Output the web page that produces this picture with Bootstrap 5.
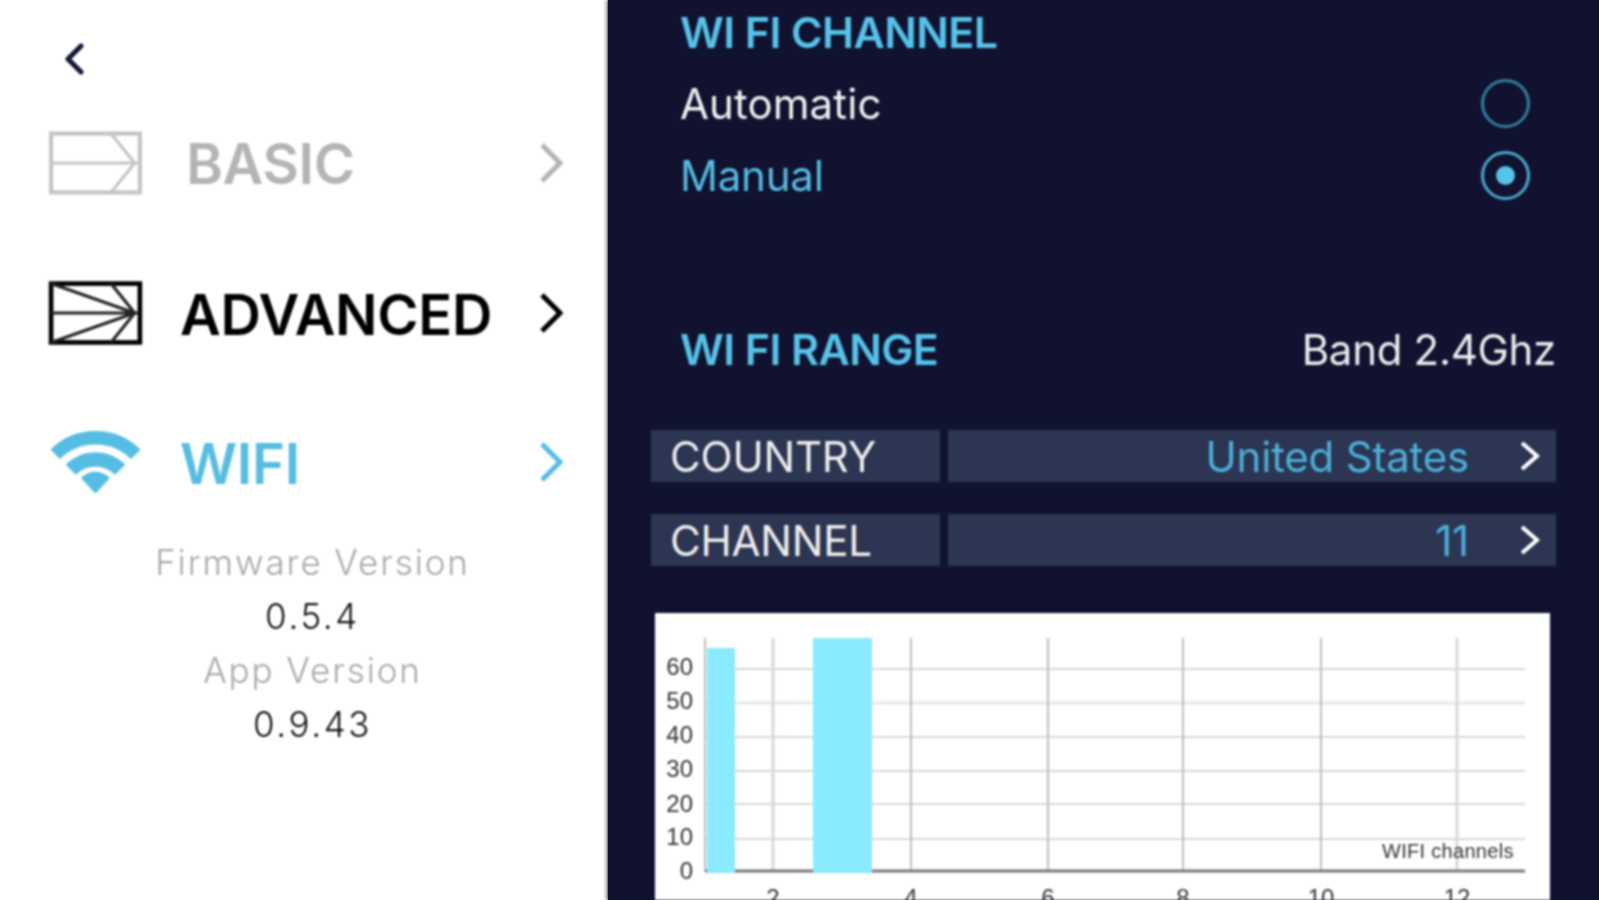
<!DOCTYPE html>
<html lang="en">
<head>
<meta charset="utf-8">
<title>WiFi settings</title>
<link href="https://cdn.jsdelivr.net/npm/bootstrap@5.3.0/dist/css/bootstrap.min.css" rel="stylesheet">
<style>
html,body{height:900px;overflow:hidden;background:linear-gradient(90deg,#fff 608px,#10122f 608px)}
body{font-family:Inter,"Liberation Sans",sans-serif}
.stage{height:900px;filter:blur(.9px)}
.side{width:608px;flex:none;padding-left:48px;padding-right:45px}
.back-link{height:88px;padding-left:16px;padding-top:43px}
.menu-row{height:150px;font-size:56px;font-weight:600;letter-spacing:-.3px}
.menu-row .lbl{flex-grow:1;line-height:1;padding-top:3px}
.menu-basic{color:#b4b4b4}.menu-basic .lbl{margin-left:42px;padding-top:1px}
.menu-adv{color:#000}.menu-adv .lbl{margin-left:36px}
.menu-wifi{color:#55bde3;height:148px}.menu-wifi .lbl{margin-left:36px}
.ver-block{text-align:center;font-size:35px;letter-spacing:1.9px;line-height:54px;font-weight:300;margin-top:-1px;margin-left:14px}
.ver-cap{color:#a8a8a8}.ver-num{color:#111;letter-spacing:2.6px}
.pane{background:#10122f;box-shadow:-2px 0 3px rgba(16,18,47,.45);min-width:0;padding-left:43px;padding-right:43px}
.sec-title{color:#55c4ea;font-size:43px;font-weight:600;letter-spacing:-.6px;line-height:50px}
.top-title{margin-top:7px;padding-left:29px}
.opt-row{height:71px;font-size:42px;padding-left:29px;padding-right:2px;color:#f2f2f2;font-weight:400;letter-spacing:.1px}
.opt-list{margin-top:11px;padding-right:24px}
.opt-on{color:#55bde3;letter-spacing:-.2px;margin-top:1px}
.radio-dot{width:49px;height:49px;border:3px solid #327f9f;border-radius:50%;display:flex;align-items:center;justify-content:center}
.opt-on .radio-dot{border-color:#4aa9cf}
.radio-dot i{width:19px;height:19px;border-radius:50%;background:#55c4ea;display:block}
.range-row{margin-top:113px;padding-left:29px;height:50px}
.range-val{color:#eee;font-size:42px;letter-spacing:-.3px}
.pick-row{height:52px;gap:8px;margin-bottom:32px;font-size:42px;color:#eee}
.pick-row>div{background:#2c3551}
.pick-key{width:289px;flex:none;padding-left:19px;letter-spacing:-.2px}
.pick-val{color:#4cb0d9;padding-right:15px;letter-spacing:-.2px}
.pick-val svg{margin-left:50px}
.first-pick{margin-top:56px}
.plot{background:#fff;margin-left:4px;margin-right:6px;margin-top:47px;height:287px;overflow:hidden}
.plot svg{display:block}
.plot text{font-family:"Liberation Sans",sans-serif;fill:#333}
</style>
</head>
<body>
<div class="stage d-flex">
  <aside class="side d-flex flex-column">
    <div class="back-link">
      <svg width="20" height="32" viewBox="0 0 20 32"><polyline points="17,3 4,16 17,29" fill="none" stroke="#14163a" stroke-width="5" stroke-linecap="round" stroke-linejoin="round"/></svg>
    </div>
    <div class="menu-row menu-basic d-flex align-items-center">
      <svg width="96" height="66" viewBox="0 0 93 63" fill="none" stroke="#c4c4c4" stroke-width="4"><rect x="3" y="3" width="86" height="57"/><path stroke-width="3" d="M3 31.500H87M61 3 84 31.500 61 60"/></svg>
      <span class="lbl">BASIC</span>
      <svg width="24" height="42" viewBox="0 0 24 42"><polyline points="3,3 21,21 3,39" fill="none" stroke="#b4b4b4" stroke-width="5"/></svg>
    </div>
    <div class="menu-row menu-adv d-flex align-items-center">
      <svg width="96" height="66" viewBox="0 0 93 63" fill="none" stroke="#000" stroke-width="4.500"><rect x="3" y="3" width="86" height="57"/><path stroke-width="3" stroke="#222" d="M3 31.500H87M61 3 84 31.500 61 60M3 3 84 31.500 3 60"/></svg>
      <span class="lbl">ADVANCED</span>
      <svg width="24" height="42" viewBox="0 0 24 42"><polyline points="3,3 21,21 3,39" fill="none" stroke="#000" stroke-width="5"/></svg>
    </div>
    <div class="menu-row menu-wifi d-flex align-items-center">
      <svg width="96" height="66" viewBox="0 0 93 63" fill="none" stroke="#55bde3"><path stroke-width="13" d="M7 24A55.500 55.500 0 0 1 85 24"/><path stroke-width="14" d="M22 39A34 34 0 0 1 70 39"/><path fill="#55bde3" stroke-width="3" stroke-linejoin="round" d="M46 60 34 47Q46 38 58 47Z"/></svg>
      <span class="lbl">WIFI</span>
      <svg width="24" height="42" viewBox="0 0 24 42"><polyline points="3,3 21,21 3,39" fill="none" stroke="#55bde3" stroke-width="5"/></svg>
    </div>
    <div class="ver-block">
      <div class="ver-cap">Firmware Version</div>
      <div class="ver-num">0.5.4</div>
      <div class="ver-cap">App Version</div>
      <div class="ver-num">0.9.43</div>
    </div>
  </aside>
  <main class="pane flex-grow-1">
    <div class="sec-title top-title">WI FI CHANNEL</div>
    <div class="opt-list">
      <div class="opt-row d-flex justify-content-between align-items-center"><span>Automatic</span><span class="radio-dot"></span></div>
      <div class="opt-row opt-on d-flex justify-content-between align-items-center"><span>Manual</span><span class="radio-dot"><i></i></span></div>
    </div>
    <div class="range-row d-flex justify-content-between align-items-center">
      <span class="sec-title">WI FI RANGE</span><span class="range-val">Band 2.4Ghz</span>
    </div>
    <div class="pick-row first-pick d-flex">
      <div class="pick-key d-flex align-items-center">COUNTRY</div>
      <div class="pick-val flex-grow-1 d-flex align-items-center justify-content-end">United States<svg width="22" height="32" viewBox="0 0 22 32"><polyline points="3,3 18,16 3,29" fill="none" stroke="#fff" stroke-width="4"/></svg></div>
    </div>
    <div class="pick-row d-flex mb-0">
      <div class="pick-key d-flex align-items-center">CHANNEL</div>
      <div class="pick-val flex-grow-1 d-flex align-items-center justify-content-end">11<svg width="22" height="32" viewBox="0 0 22 32"><polyline points="3,3 18,16 3,29" fill="none" stroke="#fff" stroke-width="4"/></svg></div>
    </div>
    <div class="plot" id="plot"><svg width="895" height="287" viewBox="655 613 895 287">
      <g stroke="#d8d8d8" stroke-width="2">
        <path d="M705 669H1525M705 737H1525M705 771H1525M705 804H1525M705 839H1525"/>
        <path stroke="#ececec" stroke-width="4" d="M705 703H1525"/>
      </g>
      <g stroke="#bcbcbc" stroke-width="2">
        <path d="M705 638V871M911 638V871M1048 638V871M1183 638V871M1321 638V871"/>
        <path stroke="#d8d8d8" stroke-width="3" d="M773 638V871M1457 638V871"/>
      </g>
      <path stroke="#777" stroke-width="3" d="M705 871H1525"/>
      <rect x="707" y="648" width="28" height="225" fill="#8aeafe"/>
      <rect x="813" y="638" width="59" height="235" fill="#8aeafe"/>
      <g font-size="24" text-anchor="end">
        <text x="693" y="675">60</text><text x="693" y="709">50</text><text x="693" y="743">40</text><text x="693" y="777">30</text><text x="693" y="812">20</text><text x="693" y="845">10</text><text x="693" y="879">0</text>
      </g>
      <g font-size="24" text-anchor="middle">
        <text x="773" y="906">2</text><text x="911" y="906">4</text><text x="1048" y="906">6</text><text x="1183" y="906">8</text><text x="1321" y="906">10</text><text x="1457" y="906">12</text>
      </g>
      <text x="1382" y="858" font-size="20" letter-spacing=".3">WIFI channels</text>
    </svg></div>
  </main>
</div>
<script src="https://cdn.jsdelivr.net/npm/bootstrap@5.3.0/dist/js/bootstrap.bundle.min.js"></script>
</body>
</html>
